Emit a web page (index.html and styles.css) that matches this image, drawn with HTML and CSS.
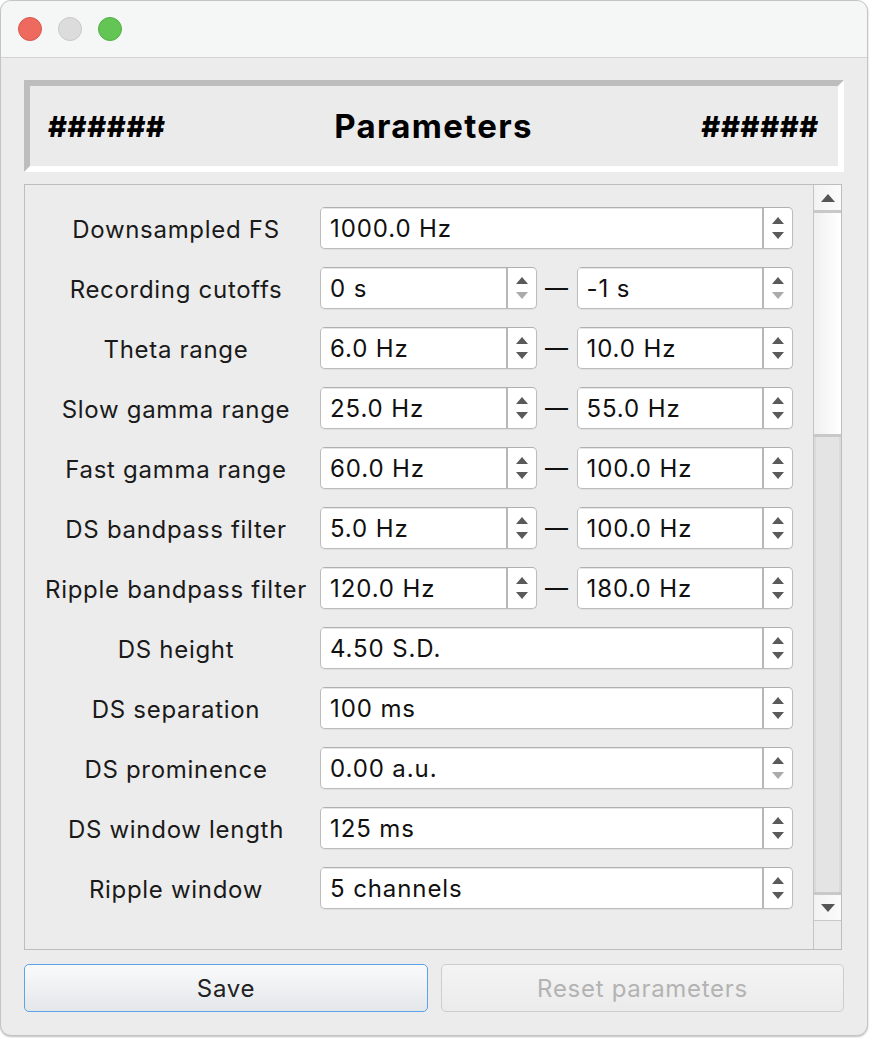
FILE: index.html
```html
<!DOCTYPE html>
<html>
<head>
<meta charset="utf-8">
<link rel="stylesheet" href="styles.css">
</head>
<body>
<div class="window">
  <div class="titlebar">
    <span class="light red"></span>
    <span class="light gray"></span>
    <span class="light green"></span>
  </div>
  <div class="content">
    <div class="header">
      <span class="hash">######</span>
      <span class="title">Parameters</span>
      <span class="hash">######</span>
    </div>
    <div class="scrollarea">
      <div class="viewport">
        <div class="row"><div class="label">Downsampled FS</div><div class="fields"><div class="spin"><span class="val">1000.0 Hz</span><span class="btns"><svg width="14" height="26" viewBox="0 0 14 26"><path d="M1 9 L7 2 L13 9 Z" class="on"/><path d="M1 17 L7 24 L13 17 Z" class="on"/></svg></span></div></div></div>
        <div class="row"><div class="label">Recording cutoffs</div><div class="fields"><div class="spin"><span class="val">0 s</span><span class="btns"><svg width="14" height="26" viewBox="0 0 14 26"><path d="M1 9 L7 2 L13 9 Z" class="on"/><path d="M1 17 L7 24 L13 17 Z" class="off"/></svg></span></div><span class="dash">—</span><div class="spin"><span class="val">-1 s</span><span class="btns"><svg width="14" height="26" viewBox="0 0 14 26"><path d="M1 9 L7 2 L13 9 Z" class="on"/><path d="M1 17 L7 24 L13 17 Z" class="off"/></svg></span></div></div></div>
        <div class="row"><div class="label">Theta range</div><div class="fields"><div class="spin"><span class="val">6.0 Hz</span><span class="btns"><svg width="14" height="26" viewBox="0 0 14 26"><path d="M1 9 L7 2 L13 9 Z" class="on"/><path d="M1 17 L7 24 L13 17 Z" class="on"/></svg></span></div><span class="dash">—</span><div class="spin"><span class="val">10.0 Hz</span><span class="btns"><svg width="14" height="26" viewBox="0 0 14 26"><path d="M1 9 L7 2 L13 9 Z" class="on"/><path d="M1 17 L7 24 L13 17 Z" class="on"/></svg></span></div></div></div>
        <div class="row"><div class="label">Slow gamma range</div><div class="fields"><div class="spin"><span class="val">25.0 Hz</span><span class="btns"><svg width="14" height="26" viewBox="0 0 14 26"><path d="M1 9 L7 2 L13 9 Z" class="on"/><path d="M1 17 L7 24 L13 17 Z" class="on"/></svg></span></div><span class="dash">—</span><div class="spin"><span class="val">55.0 Hz</span><span class="btns"><svg width="14" height="26" viewBox="0 0 14 26"><path d="M1 9 L7 2 L13 9 Z" class="on"/><path d="M1 17 L7 24 L13 17 Z" class="on"/></svg></span></div></div></div>
        <div class="row"><div class="label">Fast gamma range</div><div class="fields"><div class="spin"><span class="val">60.0 Hz</span><span class="btns"><svg width="14" height="26" viewBox="0 0 14 26"><path d="M1 9 L7 2 L13 9 Z" class="on"/><path d="M1 17 L7 24 L13 17 Z" class="on"/></svg></span></div><span class="dash">—</span><div class="spin"><span class="val">100.0 Hz</span><span class="btns"><svg width="14" height="26" viewBox="0 0 14 26"><path d="M1 9 L7 2 L13 9 Z" class="on"/><path d="M1 17 L7 24 L13 17 Z" class="on"/></svg></span></div></div></div>
        <div class="row"><div class="label">DS bandpass filter</div><div class="fields"><div class="spin"><span class="val">5.0 Hz</span><span class="btns"><svg width="14" height="26" viewBox="0 0 14 26"><path d="M1 9 L7 2 L13 9 Z" class="on"/><path d="M1 17 L7 24 L13 17 Z" class="on"/></svg></span></div><span class="dash">—</span><div class="spin"><span class="val">100.0 Hz</span><span class="btns"><svg width="14" height="26" viewBox="0 0 14 26"><path d="M1 9 L7 2 L13 9 Z" class="on"/><path d="M1 17 L7 24 L13 17 Z" class="on"/></svg></span></div></div></div>
        <div class="row"><div class="label">Ripple bandpass filter</div><div class="fields"><div class="spin"><span class="val">120.0 Hz</span><span class="btns"><svg width="14" height="26" viewBox="0 0 14 26"><path d="M1 9 L7 2 L13 9 Z" class="on"/><path d="M1 17 L7 24 L13 17 Z" class="on"/></svg></span></div><span class="dash">—</span><div class="spin"><span class="val">180.0 Hz</span><span class="btns"><svg width="14" height="26" viewBox="0 0 14 26"><path d="M1 9 L7 2 L13 9 Z" class="on"/><path d="M1 17 L7 24 L13 17 Z" class="on"/></svg></span></div></div></div>
        <div class="row"><div class="label">DS height</div><div class="fields"><div class="spin"><span class="val">4.50 S.D.</span><span class="btns"><svg width="14" height="26" viewBox="0 0 14 26"><path d="M1 9 L7 2 L13 9 Z" class="on"/><path d="M1 17 L7 24 L13 17 Z" class="on"/></svg></span></div></div></div>
        <div class="row"><div class="label">DS separation</div><div class="fields"><div class="spin"><span class="val">100 ms</span><span class="btns"><svg width="14" height="26" viewBox="0 0 14 26"><path d="M1 9 L7 2 L13 9 Z" class="on"/><path d="M1 17 L7 24 L13 17 Z" class="on"/></svg></span></div></div></div>
        <div class="row"><div class="label">DS prominence</div><div class="fields"><div class="spin"><span class="val">0.00 a.u.</span><span class="btns"><svg width="14" height="26" viewBox="0 0 14 26"><path d="M1 9 L7 2 L13 9 Z" class="on"/><path d="M1 17 L7 24 L13 17 Z" class="off"/></svg></span></div></div></div>
        <div class="row"><div class="label">DS window length</div><div class="fields"><div class="spin"><span class="val">125 ms</span><span class="btns"><svg width="14" height="26" viewBox="0 0 14 26"><path d="M1 9 L7 2 L13 9 Z" class="on"/><path d="M1 17 L7 24 L13 17 Z" class="on"/></svg></span></div></div></div>
        <div class="row"><div class="label">Ripple window</div><div class="fields"><div class="spin"><span class="val">5 channels</span><span class="btns"><svg width="14" height="26" viewBox="0 0 14 26"><path d="M1 9 L7 2 L13 9 Z" class="on"/><path d="M1 17 L7 24 L13 17 Z" class="on"/></svg></span></div></div></div>
      </div>
      <div class="scrollbar">
        <div class="sb-btn"><svg width="14" height="8" viewBox="0 0 14 8"><path d="M0 8 L7 0 L14 8 Z"/></svg></div>
        <div class="sb-thumb"></div>
        <div class="sb-track"></div>
        <div class="sb-btn down"><svg width="14" height="8" viewBox="0 0 14 8"><path d="M0 0 L7 8 L14 0 Z"/></svg></div>
        <div class="sb-corner"></div>
      </div>
    </div>
    <div class="buttons">
      <button class="btn primary">Save</button>
      <button class="btn disabled">Reset parameters</button>
    </div>
  </div>
</div>
</body>
</html>
```
FILE: styles.css
```css
* { box-sizing: border-box; }
html, body { margin: 0; padding: 0; background: #ffffff; }
body {
  width: 870px;
  height: 1038px;
  overflow: hidden;
  font-family: Inter, "Liberation Sans", sans-serif;
}
.window {
  width: 868px;
  height: 1036px;
  border: 1px solid #c4c4c4;
  border-radius: 11px;
  background: #ececec;
  overflow: hidden;
  display: flex;
  flex-direction: column;
  box-shadow: 0 1px 2px rgba(0,0,0,0.25);
}
.titlebar {
  height: 57px;
  background: #f5f6f6;
  border-bottom: 1px solid #d4d4d4;
  display: flex;
  align-items: center;
  padding-left: 17px;
  gap: 16px;
  flex: none;
}
.light {
  width: 24px;
  height: 24px;
  border-radius: 50%;
  display: block;
}
.light.red { background: #ee6a5f; border: 1px solid #d9564b; }
.light.gray { background: #dcdcdc; border: 1px solid #c9c9c9; }
.light.green { background: #62c554; border: 1px solid #53ae46; }
.content {
  flex: 1;
  padding: 22px 25px 0 23px;
  display: flex;
  flex-direction: column;
}
.header {
  height: 92px;
  width: 820px;
  border-style: solid;
  border-width: 6px;
  border-color: #bdbdbd #ffffff #ffffff #bdbdbd;
  background: #ebebeb;
  display: flex;
  align-items: center;
  justify-content: space-between;
  padding: 0 19px 0 18px;
  font-weight: 700;
  color: #000;
}
.hash { font-size: 29px; letter-spacing: 0.6px; font-weight: 800; }
.title { font-size: 33px; font-weight: 700; letter-spacing: 1.3px; }
.scrollarea {
  margin-top: 12px;
  width: 818px;
  height: 766px;
  border: 1px solid #bdbdbd;
  display: flex;
  background: #ececec;
}
.viewport {
  flex: 1;
  overflow: hidden;
  padding: 22px 20px 0 12px;
  display: flex;
  flex-direction: column;
  gap: 18px;
}
.row {
  display: grid;
  grid-template-columns: 278px 1fr;
  column-gap: 5px;
  height: 42px;
  align-items: center;
  flex: none;
}
.label {
  text-align: center;
  font-size: 24px;
  color: #1a1a1a;
  letter-spacing: 0.7px;
  padding-top: 2px;
}
.fields {
  display: flex;
  align-items: center;
  height: 42px;
}
.spin {
  flex: 1;
  height: 42px;
  background: #ffffff;
  border: 1px solid #bcbcbc;
  border-top-color: #b0b0b0;
  border-radius: 5px;
  display: flex;
  align-items: stretch;
  box-shadow: 0 1px 1px rgba(0,0,0,0.06);
}
.val {
  flex: 1;
  padding-left: 9px;
  font-size: 24px;
  color: #111;
  display: flex;
  align-items: center;
  letter-spacing: 0.9px;
  border-top: 1px solid #e6e6e6;
}
.btns {
  width: 30px;
  border-left: 2px solid #b7b7b7;
  display: flex;
  align-items: center;
  justify-content: center;
}
.btns .on { fill: #5a5a5a; }
.btns .off { fill: #ababab; }
.dash {
  width: 40px;
  text-align: center;
  font-size: 23px;
  color: #111;
  flex: none;
}
.scrollbar {
  width: 28px;
  flex: none;
  border-left: 1px solid #c4c4c4;
  display: flex;
  flex-direction: column;
  background: #ececec;
}
.sb-btn {
  height: 28px;
  flex: none;
  background: linear-gradient(to right, #f2f2f2, #fbfbfb);
  border-bottom: 3px solid #c8c8c8;
  display: flex;
  align-items: center;
  justify-content: center;
}
.sb-btn svg path { fill: #555; }
.sb-btn.down {
  border-bottom: 1px solid #c8c8c8;
  border-top: 3px solid #c8c8c8;
  height: 29px;
}
.sb-thumb {
  height: 224px;
  flex: none;
  background: linear-gradient(to right, #f0f0f0, #ffffff);
  border-bottom: 3px solid #c8c8c8;
}
.sb-track {
  flex: 1;
  background: #e4e4e4;
  border-left: 2px solid #dadada;
  border-right: 2px solid #dadada;
}
.sb-corner {
  height: 28px;
  flex: none;
  background: #ececec;
}
.buttons {
  display: flex;
  gap: 13px;
  margin-top: 14px;
  width: 820px;
}
.btn {
  height: 48px;
  border-radius: 5px;
  font-family: Inter, "Liberation Sans", sans-serif;
  font-size: 24px;
  letter-spacing: 0.7px;
  padding-top: 2px;
}
.btn.primary {
  width: 404px;
  border: 1px solid #5ea2ea;
  background: linear-gradient(to bottom, #f9fafb, #e4e7ea);
  color: #222;
}
.btn.disabled {
  flex: 1;
  border: 1px solid #cdcdcd;
  background: linear-gradient(to bottom, #f4f4f4, #ebebeb);
  color: #b3b3b3;
}
```
